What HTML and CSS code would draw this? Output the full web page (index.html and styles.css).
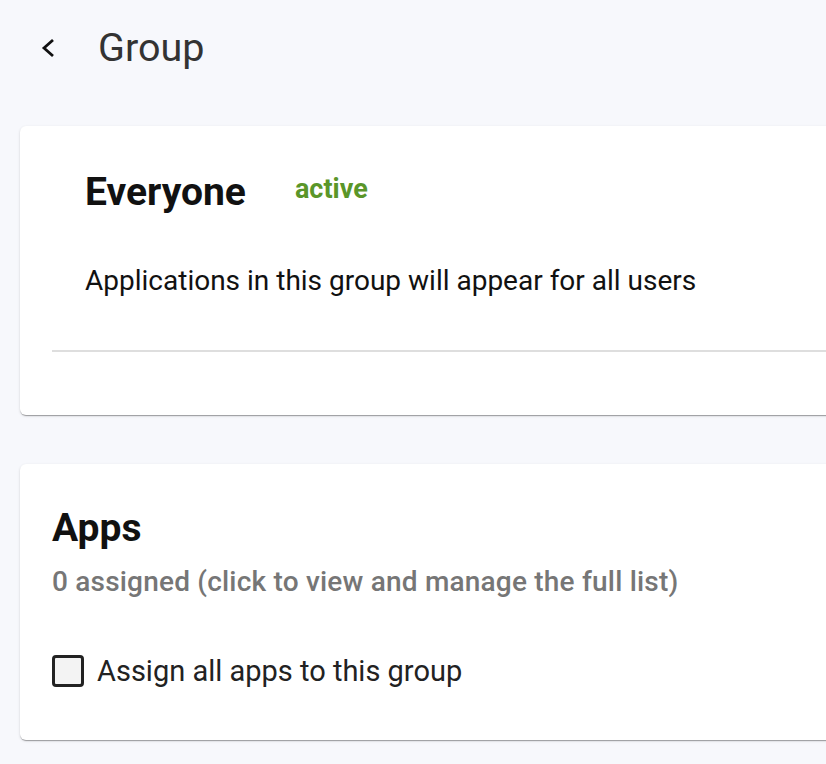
FILE: index.html
```html
<!DOCTYPE html>
<html>
<head>
<meta charset="utf-8">
<link rel="stylesheet" href="styles.css">
</head>
<body>
<div class="page">
  <header class="topbar">
    <span class="back">
      <svg width="14" height="20" viewBox="0 0 14 20"><polyline points="12,2 3,10 12,18" fill="none" stroke="#111" stroke-width="2.8" stroke-linecap="butt" stroke-linejoin="miter"/></svg>
    </span>
    <h1 class="title">Group</h1>
  </header>

  <section class="card card-group">
    <div class="group-head">
      <div class="name-row">
        <h2 class="name">Everyone</h2>
        <span class="status">active</span>
      </div>
      <p class="desc">Applications in this group will appear for all users</p>
    </div>
    <hr class="divider">
    <div class="actions"></div>
  </section>

  <section class="card card-apps">
    <h2 class="apps-title">Apps</h2>
    <p class="apps-sub">0 assigned (click to view and manage the full list)</p>
    <label class="check-row">
      <span class="checkbox"></span>
      <span class="check-label">Assign all apps to this group</span>
    </label>
  </section>
</div>
</body>
</html>
```

FILE: styles.css
```css
html, body {
  margin: 0;
  padding: 0;
  background: #f7f8fc;
  overflow: hidden;
}
body {
  font-family: Roboto, "Liberation Sans", Arial, sans-serif;
  width: 826px;
  height: 764px;
}
.page {
  width: 900px;
  padding: 0 0 0 20px;
}
.topbar {
  display: flex;
  align-items: center;
  height: 96px;
  margin-left: 21px;
}
.back {
  display: flex;
  width: 14px;
  height: 20px;
  margin-top: -1px;
}
.title {
  margin: 0 0 0 43px;
  font-size: 39.5px;
  line-height: 48px;
  font-weight: 400;
  color: #333;
}
.card {
  background: #fff;
  border-radius: 6px;
  box-shadow: 0 2px 1px -1px rgba(0,0,0,0.2), 0 1px 1px 0 rgba(0,0,0,0.14), 0 1px 3px 0 rgba(0,0,0,0.12);
  margin-top: 30px;
  padding: 32px;
}
.card-group {
  height: 225px;
}
.group-head {
  padding: 10px 33px 0;
}
.name-row {
  display: flex;
  align-items: center;
  gap: 49px;
}
.name {
  margin: 0;
  font-size: 39px;
  line-height: 48px;
  font-weight: 700;
  color: #111;
}
.status {
  font-size: 27px;
  line-height: 32px;
  font-weight: 700;
  color: #5a9629;
  margin-top: -6px;
}
.desc {
  margin: 49px 0 0;
  font-size: 28px;
  line-height: 32px;
  color: #111;
}
.divider {
  border: 0;
  border-top: 2px solid #dedede;
  margin: 53px 0 0;
}
.card-apps {
  margin-top: 49px;
  height: 212px;
}
.apps-title {
  margin: 8px 0 0;
  font-size: 39px;
  line-height: 48px;
  font-weight: 700;
  color: #111;
}
.apps-sub {
  margin: 14px 0 0;
  font-size: 28px;
  line-height: 32px;
  font-weight: 500;
  letter-spacing: 0.2px;
  color: #767676;
}
.check-row {
  display: flex;
  align-items: center;
  margin-top: 57px;
  gap: 13px;
}
.checkbox {
  box-sizing: border-box;
  width: 32px;
  height: 32px;
  border: 3px solid #222;
  border-radius: 4px;
  background: #f3f3f3;
}
.check-label {
  font-size: 29px;
  line-height: 32px;
  color: #222;
}
```
